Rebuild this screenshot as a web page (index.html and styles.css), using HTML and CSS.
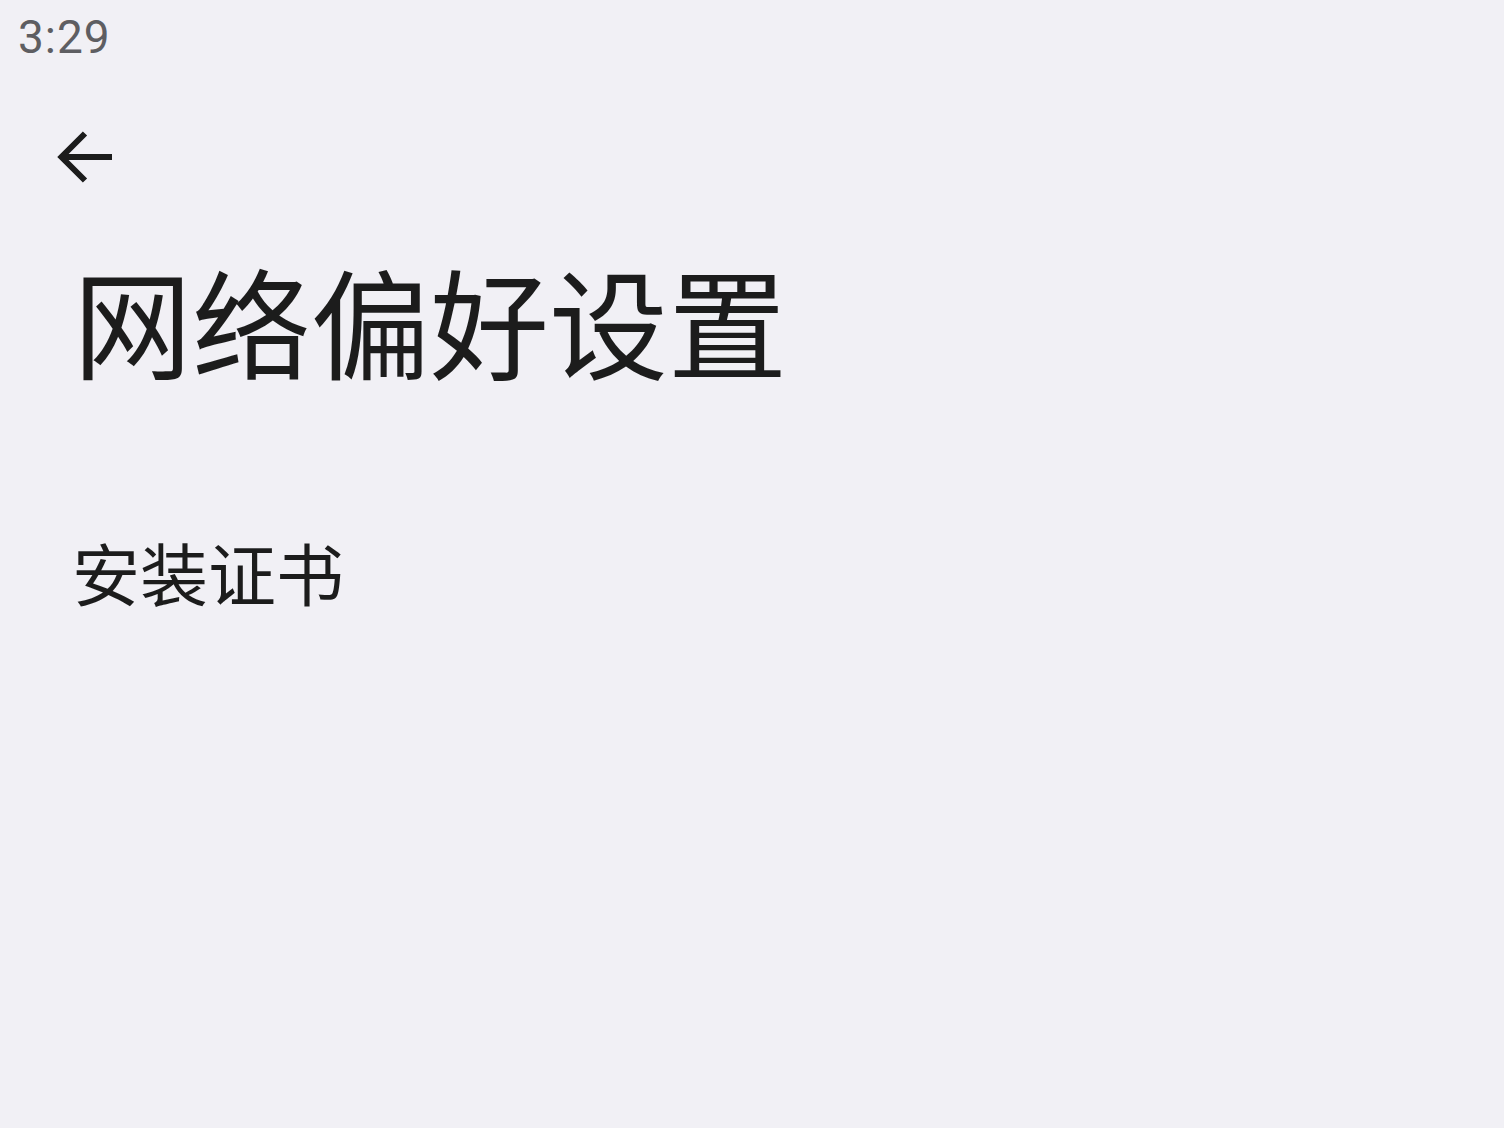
FILE: index.html
```html
<!DOCTYPE html>
<html lang="zh-CN">
<head>
<meta charset="utf-8">
<title>网络偏好设置</title>
<link rel="stylesheet" href="styles.css">
</head>
<body>
<div class="screen">
  <div class="status-bar"><span class="time">3:29</span></div>
  <div class="toolbar">
    <button class="back" aria-label="返回">
      <svg viewBox="0 0 56 56" width="56" height="56" aria-hidden="true">
        <path d="M55 27H5 M28 3.5 L4.5 27 L28 50.5" fill="none" stroke="#1c1c1c" stroke-width="6" stroke-linecap="butt" stroke-linejoin="miter"/>
      </svg>
    </button>
  </div>
  <h1 class="title">网络偏好设置</h1>
  <ul class="prefs">
    <li class="pref-item">安装证书</li>
  </ul>
</div>
</body>
</html>
```

FILE: styles.css
```css
html, body {
  margin: 0;
  padding: 0;
  background: #f1f0f5;
}
body {
  font-family: "Noto Sans CJK SC", "Noto Sans", sans-serif;
  color: #1c1c1c;
}
.screen {
  width: 1504px;
  height: 1128px;
  display: flex;
  flex-direction: column;
}
.status-bar {
  height: 64px;
  padding-left: 18px;
  display: flex;
  align-items: flex-start;
}
.time {
  font-family: Roboto, "Liberation Sans", sans-serif;
  font-size: 46px;
  letter-spacing: 1px;
  line-height: 56px;
  padding-top: 9px;
  color: #5e5e62;
}
.toolbar {
  height: 130px;
  padding-left: 57px;
  padding-top: 66px;
  box-sizing: border-box;
  display: flex;
  align-items: flex-start;
}
.back {
  border: 0;
  padding: 0;
  background: transparent;
  width: 56px;
  height: 56px;
  display: block;
}
.back svg { display: block; }
.title {
  margin: 66px 0 0 0;
  padding-left: 73px;
  font-size: 119px;
  font-weight: 400;
  line-height: 1;
  color: #1c1c1c;
}
.prefs {
  list-style: none;
  margin: 0;
  padding: 0;
}
.pref-item {
  margin-top: 159px;
  padding-left: 72px;
  font-size: 68px;
  line-height: 1;
  color: #1c1c1c;
}
```
